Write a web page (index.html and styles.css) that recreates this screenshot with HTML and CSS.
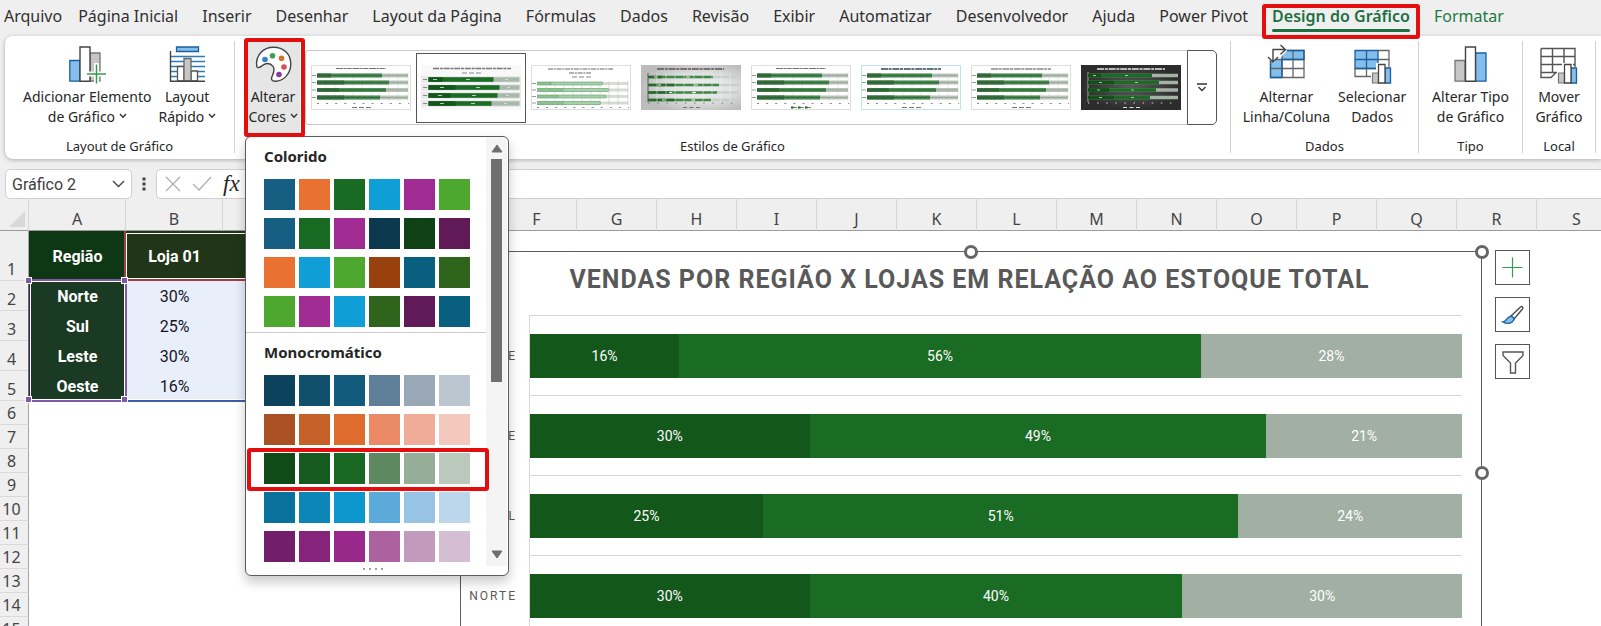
FILE: index.html
```html
<!DOCTYPE html>
<html lang="pt-BR">
<head>
<meta charset="utf-8">
<title>Vendas por região</title>
<link rel="stylesheet" href="styles.css">
</head>
<body>
<svg class="defs" aria-hidden="true">
  <defs>
    <symbol id="chev" viewBox="0 0 8 6"><path d="M1 1l3 3.2L7 1" fill="none" stroke="#333" stroke-width="1.4"/></symbol>
    <g id="title-sm"><path d="M25 3.500h50" stroke="#444" stroke-width="1.2" stroke-dasharray="7 .6 2.5 .6 5 .8" opacity=".75"/></g>
    <g id="axis-sm">
      <path d="M6 38.5h92" stroke="#888" stroke-width="1" stroke-dasharray="2 7.1"/>
      <path d="M41 42.5h19" stroke="#777" stroke-width="1" stroke-dasharray="5 2"/>
      <path d="M1 10.5h4M1 17.5h4M1 25h4M1 32.5h4" stroke="#999" stroke-width="1"/>
      <path d="M15 8v28M24 8v28M33 8v28M42 8v28M51 8v28M60 8v28M69 8v28M78 8v28M87 8v28M97 8v28" stroke="#ddd" stroke-width=".6"/>
    </g>
    <g id="bars-sm" stroke-width="4">
      <path d="M6 10.5h91M6 17.5h91M6 25h91M6 32.5h91" stroke="#b9c3b9"/>
      <path d="M6 10.5h65M6 17.5h72M6 25h69M6 32.5h63" stroke="#4f9158"/>
      <path d="M6 10.5h14M6 17.5h27M6 25h22M6 32.5h27" stroke="#3c7343"/>
      <path d="M6 10.5h65M6 17.5h72M6 25h69M6 32.5h63" stroke="#1f5a28" stroke-width="1.4" opacity=".6"/>
      <path d="M71 10.5h26M78 17.5h19M75 25h22M69 32.5h28" stroke="#7d8c7e" stroke-width=".8" opacity=".6"/>
    </g>
  </defs>
</svg>
<div class="app">
  <nav class="tabs">
    <a class="tab tab-file" href="#">Arquivo</a>
    <a class="tab" href="#">Página Inicial</a>
    <a class="tab" href="#">Inserir</a>
    <a class="tab" href="#">Desenhar</a>
    <a class="tab" href="#">Layout da Página</a>
    <a class="tab" href="#">Fórmulas</a>
    <a class="tab" href="#">Dados</a>
    <a class="tab" href="#">Revisão</a>
    <a class="tab" href="#">Exibir</a>
    <a class="tab" href="#">Automatizar</a>
    <a class="tab" href="#">Desenvolvedor</a>
    <a class="tab" href="#">Ajuda</a>
    <a class="tab" href="#">Power Pivot</a>
    <a class="tab tab-active" href="#">Design do Gráfico<span class="mark mark-tab"></span></a>
    <a class="tab tab-context" href="#">Formatar</a>
  </nav>

  <div class="ribbon">
    <section class="group group-layout">
      <div class="tools">
        <button class="tool">
          <svg class="icon" viewBox="0 0 37 38"><path d="M.8 14.5h10v20.7H.8z" fill="#83beec" stroke="#1c5f9e" stroke-width="1.3"/><path d="M21 7h10v28H21z" fill="#c8c6c4" stroke="#797774" stroke-width="1.3"/><path d="M11 1h10v34.2H11z" fill="#fff" stroke="#444" stroke-width="1.4"/><path d="M27.5 17v21M17 28h20" stroke="#fff" stroke-width="5"/><path d="M27.5 18.5v19M18 28h19" stroke="#2f9e4c" stroke-width="1.5"/></svg>
          <span>Adicionar Elemento<br>de Gráfico <svg class="chev"><use href="#chev"/></svg></span>
        </button>
        <button class="tool">
          <svg class="icon" viewBox="0 0 37 38"><path d="M1.5 10.5H36M1.5 15.5H36M1.5 20.5H36M1.5 25.5H36M1.5 30.5H36" stroke="#2b7cb5" stroke-width="1.4"/><path d="M7.5 1h22v4.5h-22z" fill="#83beec" stroke="#1c5f9e" stroke-width="1.3"/><path d="M8.5 20.5h6.5V35H8.5zM22 25h6.5v10H22z" fill="#fff" stroke="#555" stroke-width="1.3"/><path d="M15 12.5h7V35h-7z" fill="#c8c6c4" stroke="#666" stroke-width="1.3"/><path d="M1.5 5v30.2H36" fill="none" stroke="#444" stroke-width="1.4"/></svg>
          <span>Layout<br>Rápido <svg class="chev"><use href="#chev"/></svg></span>
        </button>
      </div>
      <h2 class="group-name">Layout de Gráfico</h2>
    </section>

    <section class="group group-styles">
      <div class="tools">
        <div class="colors">
          <button class="tool tool-open" aria-expanded="true">
            <svg class="icon" viewBox="0 0 37 38"><path d="M1.8 20.5C.2 9.5 8 1.2 18.5 1.2 28.5 1.2 35.8 8 35.8 18c0 9.800-7.500 17.500-16 17.200-3.800-.1-3.800-2.800-2.600-5.200 1.400-3 3.200-6.300.8-9.600-2.500-3.200-6-3.400-9.200-1.700-2.600 1.400-5.900 4.600-7 1.800z" fill="#fff" stroke="#444" stroke-width="1.4"/><circle cx="10" cy="13.5" r="2.8" fill="#2e84cc"/><circle cx="17.5" cy="9.8" r="2.8" fill="#3f9e54"/><circle cx="26.5" cy="12.2" r="2.8" fill="#d8732a"/><circle cx="29" cy="21" r="2.8" fill="#d6505a"/><circle cx="24" cy="28.5" r="2.8" fill="#8c36a8"/></svg>
            <span>Alterar<br>Cores <svg class="chev"><use href="#chev"/></svg></span>
          </button>
          <span class="mark mark-colors"></span>

          <div class="menu">
            <div class="menu-body">
              <div class="palette">
                <section class="palette-part">
                  <h3>Colorido</h3>
                  <button class="ramp" aria-label="Colorido 1"><i class="c-blue"></i><i class="c-orange"></i><i class="c-green"></i><i class="c-cyan"></i><i class="c-purple"></i><i class="c-lime"></i></button>
                  <button class="ramp" aria-label="Colorido 2"><i class="c-blue"></i><i class="c-green"></i><i class="c-purple"></i><i class="c-navy"></i><i class="c-forest"></i><i class="c-plum"></i></button>
                  <button class="ramp" aria-label="Colorido 3"><i class="c-orange"></i><i class="c-cyan"></i><i class="c-lime"></i><i class="c-rust"></i><i class="c-teal"></i><i class="c-moss"></i></button>
                  <button class="ramp" aria-label="Colorido 4"><i class="c-lime"></i><i class="c-purple"></i><i class="c-cyan"></i><i class="c-moss"></i><i class="c-plum"></i><i class="c-teal"></i></button>
                </section>
                <section class="palette-part">
                  <h3>Monocromático</h3>
                  <button class="ramp" aria-label="Monocromático azul"><i class="b1"></i><i class="b2"></i><i class="b3"></i><i class="b4"></i><i class="b5"></i><i class="b6"></i></button>
                  <button class="ramp" aria-label="Monocromático laranja"><i class="o1"></i><i class="o2"></i><i class="o3"></i><i class="o4"></i><i class="o5"></i><i class="o6"></i></button>
                  <button class="ramp" aria-label="Monocromático verde"><i class="g1"></i><i class="g2"></i><i class="g3"></i><i class="g4"></i><i class="g5"></i><i class="g6"></i><span class="mark mark-ramp"></span></button>
                  <button class="ramp" aria-label="Monocromático ciano"><i class="s1"></i><i class="s2"></i><i class="s3"></i><i class="s4"></i><i class="s5"></i><i class="s6"></i></button>
                  <button class="ramp" aria-label="Monocromático roxo"><i class="p1"></i><i class="p2"></i><i class="p3"></i><i class="p4"></i><i class="p5"></i><i class="p6"></i></button>
                </section>
              </div>
              <div class="scroll">
                <svg class="arrow" viewBox="0 0 12 9"><path d="M6 1l5 7H1z" fill="#6e6e6e" stroke="#6e6e6e" stroke-linejoin="round"/></svg>
                <div class="thumb"></div>
                <svg class="arrow" viewBox="0 0 12 9"><path d="M6 8l5-7H1z" fill="#6e6e6e" stroke="#6e6e6e" stroke-linejoin="round"/></svg>
              </div>
            </div>
            <div class="grip"><i></i><i></i><i></i><i></i></div>
          </div>
        </div>

        <div class="gallery">
          <div class="styles">
            <button class="style" aria-label="Estilo 1"><svg viewBox="0 0 100 45"><path d="M.5.5h99v44H.5z" fill="#fff" stroke="#ddd"/><use href="#title-sm"/><use href="#axis-sm"/><use href="#bars-sm"/></svg></button>
            <button class="style style-on" aria-label="Estilo 2"><svg viewBox="0 0 100 45"><path d="M0 0h100v45H0z" fill="#e9eaec"/><path d="M0 0h100v11H0zM0 18h100v1H0zM0 26h100v1H0zM0 34h100v1H0zM0 42h100v3H0z" fill="#f8f8f8"/><path d="M12 3.5h78" stroke="#777" stroke-width="1.6" stroke-dasharray="6 .8 3 .8"/><path d="M41 8h19" stroke="#888" stroke-width="1" stroke-dasharray="5 2"/><path d="M2 14.5h4M2 22.5h4M2 30.5h4M2 38.5h4" stroke="#888"/><g stroke-width="4.5"><path d="M7.5 14.5h91M7.5 22.5h91M7.5 30.5h91M7.5 38.5h91" stroke="#a9b8aa"/><path d="M7.5 14.5h65M7.5 22.5h71M7.5 30.5h69M7.5 38.5h63" stroke="#1a6b23"/><path d="M7.5 14.5h14M7.5 22.5h27M7.5 30.5h22M7.5 38.5h27" stroke="#13551b"/></g><path d="M12 14.5h4M45 14.5h4M84 14.5h3M19 22.5h4M55 22.5h4M86 22.5h3M17 30.5h4M51 30.5h4M85 30.5h3M19 38.5h4M50 38.5h4M83 38.5h3" stroke="#dfe8df" stroke-width=".8"/></svg></button>
            <button class="style" aria-label="Estilo 3"><svg viewBox="0 0 100 45"><path d="M.5.5h99v44H.5z" fill="#fff" stroke="#ddd"/><path d="M17 4h65M38 8h22" stroke="#999" stroke-width="1.3" stroke-dasharray="5 .8 2 .8"/><path d="M41 12h19" stroke="#888" stroke-dasharray="5 2"/><path d="M6 42.5h92" stroke="#888" stroke-dasharray="2 7.1"/><path d="M1 18.5h4M1 25h4M1 31.5h4M1 38h4" stroke="#999"/><g stroke-width="3"><path d="M6 18.5h91M6 25h91M6 31.5h91M6 38h91" stroke="#d5dbd5"/><path d="M6 18.5h65M6 25h71M6 31.5h69M6 38h63" stroke="#a5d0a9"/><path d="M6 18.5h14M6 25h27M6 31.5h22M6 38h27" stroke="#8cc092"/></g><path d="M6 17h65M6 20h65M6 23.5h71M6 26.5h71M6 30h69M6 33h69M6 36.5h63M6 39.5h63M71.5 17v3M77.5 23.5v3M75 30v3M69.5 36.5v3M20 17v3" stroke="#5ba365" stroke-width=".6"/><path d="M15 16v24M24 16v24M33 16v24M42 16v24M51 16v24M60 16v24M69 16v24M78 16v24M87 16v24M97 16v24" stroke="#bbb" stroke-width=".5"/></svg></button>
            <button class="style" aria-label="Estilo 4"><svg viewBox="0 0 100 45"><defs><radialGradient id="grey" cx=".6" cy=".5" r=".6"><stop offset="0" stop-color="#efefef"/><stop offset=".5" stop-color="#e2e2e2"/><stop offset="1" stop-color="#bcbcbc"/></radialGradient></defs><path d="M0 0h100v45H0z" fill="url(#grey)"/><path d="M16 4h67" stroke="#555" stroke-width="1.3" stroke-dasharray="7 .8 3 .8"/><path d="M7 8v29" stroke="#555"/><path d="M7 38h92" stroke="#777" stroke-dasharray="1.5 7.7"/><path d="M42 42.5h18" stroke="#777" stroke-dasharray="4 2.5"/><g stroke-width="2.5"><path d="M7 12h91M7 20h91M7 27.5h91M7 35h91" stroke="#c9d0c9"/><path d="M7 12h65M7 20h71M7 27.5h69M7 35h63" stroke="#3c8a46"/><path d="M7 12h14M7 20h27M7 27.5h22M7 35h27" stroke="#27682f"/></g><path d="M13 12h3M45 12h4M17 20h3M53 20h4M28 27.5h3M51 27.5h4M21 35h3M50 35h4" stroke="#eee"/><path d="M16 8v29M25 8v29M34 8v29M43 8v29M53 8v29M62 8v29M71 8v29M80 8v29M89 8v29" stroke="#eee" stroke-width=".5"/></svg></button>
            <button class="style" aria-label="Estilo 5"><svg viewBox="0 0 100 45"><path d="M.5.5h99v44H.5z" fill="#fff" stroke="#ddd"/><use href="#title-sm"/><use href="#axis-sm"/><use href="#bars-sm"/><path d="M40 42.5h20" stroke="#28602f" stroke-width="2" stroke-dasharray="2.5 4.5"/></svg></button>
            <button class="style" aria-label="Estilo 6"><svg viewBox="0 0 100 45"><path d="M.5.5h99v44H.5z" fill="#fff" stroke="#c3e0f0"/><path d="M20 4h60" stroke="#345" stroke-width="1.3" stroke-dasharray="7 .6 3 .8"/><use href="#axis-sm"/><use href="#bars-sm"/></svg></button>
            <button class="style" aria-label="Estilo 7"><svg viewBox="0 0 100 45"><path d="M.5.5h99v44H.5z" fill="#fff" stroke="#ddd"/><path d="M20 4h60" stroke="#888" stroke-width="1.3" stroke-dasharray="7 .6 3 .8"/><use href="#axis-sm"/><use href="#bars-sm"/></svg></button>
            <button class="style" aria-label="Estilo 8"><svg viewBox="0 0 100 45"><defs><radialGradient id="dark"><stop offset="0" stop-color="#5a5a5a"/><stop offset="1" stop-color="#2c2c2c"/></radialGradient></defs><path d="M0 0h100v45H0z" fill="url(#dark)"/><path d="M16 4h68" stroke="#e8e8e8" stroke-width="1.3" stroke-dasharray="7 .8 3 .8"/><path d="M7 7v30" stroke="#aaa"/><g stroke-width="3.5"><path d="M7 10.5h90M7 17.5h90M7 25h90M7 32.5h90" stroke="#a5b3a6"/><path d="M7 10.5h64M7 17.5h71M7 25h68M7 32.5h62" stroke="#1a6b23"/><path d="M7 10.5h13M7 17.5h26M7 25h21M7 32.5h26" stroke="#124f19"/></g><path d="M12 10.5h3M44 10.5h3M18 17.5h3M54 17.5h3M16 25h3M50 25h3M18 32.5h3M50 32.5h3" stroke="#cde0cf" stroke-width=".8"/><path d="M7 38h91" stroke="#ccc" stroke-dasharray="1.5 7.6"/><path d="M42 42.5h18" stroke="#ddd" stroke-dasharray="4 2.5"/></svg></button>
          </div>
          <button class="more" aria-label="Mais estilos"><svg viewBox="0 0 10 9"><path d="M0 1h10M1.5 4L5 7.5 8.5 4" fill="none" stroke="#333" stroke-width="1.3"/></svg></button>
        </div>
      </div>
      <h2 class="group-name">Estilos de Gráfico</h2>
    </section>

    <section class="group group-data">
      <div class="tools">
        <button class="tool">
          <svg class="icon" viewBox="0 0 37 38"><path d="M3 4.5h33v27H3z" fill="#fff"/><path d="M13 4.5h23v9H14v18H2.5v-18h11z" fill="#83beec"/><path d="M2.5 31.5v-18M2.5 31.5H36v-27H14M14 4.5v27M25 4.5v27M2.5 13.5H36M2.5 22.5H36" fill="none" stroke="#666" stroke-width="1.3"/><path d="M14 31.5H2.5v-18M14 31.5v-18h22v-9H14" fill="none" stroke="#1c5f9e" stroke-width="1.3"/><path d="M0 0h17l2 5-6 6H9l-3 6-6-4z" fill="#fff"/><path d="M5 15V3.500h12M0 11l5 5 5-5M12.500-1l5 4.700-5 4.600" fill="none" stroke="#444" stroke-width="1.4"/></svg>
          <span>Alternar<br>Linha/Coluna</span>
        </button>
        <button class="tool">
          <svg class="icon" viewBox="0 0 37 38"><path d="M1 4.5h34v26H1z" fill="#fff"/><path d="M1 4.5h23v18H1z" fill="#83beec"/><path d="M1 22.5v8h34v-26H24M24 13.5h11M1 22.5h34M12.5 22.5v8M24 22.5v8" fill="none" stroke="#666" stroke-width="1.3"/><path d="M1 4.5h23v18H1zM12.5 4.5v18M1 13.5h23" fill="none" stroke="#1c5f9e" stroke-width="1.3"/><path d="M17 25h5v-8h11v4h5v18H17z" fill="#fff"/><path d="M18.5 27h6v10h-6z" fill="#c8c6c4" stroke="#797774" stroke-width="1.2"/><path d="M31 22h5.5v15H31z" fill="#83beec" stroke="#1c5f9e" stroke-width="1.3"/><path d="M24.5 18.5H31V37h-6.5z" fill="#fff" stroke="#444" stroke-width="1.3"/></svg>
          <span>Selecionar<br>Dados</span>
        </button>
      </div>
      <h2 class="group-name">Dados</h2>
    </section>

    <section class="group group-type">
      <div class="tools">
        <button class="tool">
          <svg class="icon" viewBox="0 0 37 38"><path d="M3 14.5h10v20.7H3z" fill="#c8c6c4" stroke="#797774" stroke-width="1.3"/><path d="M23.5 7H34v28.2H23.5z" fill="#83beec" stroke="#1c5f9e" stroke-width="1.3"/><path d="M13.5 1h10v34.2h-10z" fill="#fff" stroke="#444" stroke-width="1.4"/></svg>
          <span>Alterar Tipo<br>de Gráfico</span>
        </button>
      </div>
      <h2 class="group-name">Tipo</h2>
    </section>

    <section class="group group-place">
      <div class="tools">
        <button class="tool">
          <svg class="icon" viewBox="0 0 37 38"><path d="M1 2.5h34v22M1 2.5v29h10l5-5H1M1 10.5h34M1 18.5h34M12.5 2.5v24M24 2.5v18M13 26.5h7" fill="none" stroke="#555" stroke-width="1.4"/><path d="M17 25h5v-8h11v4h5v18H17z" fill="#fff"/><path d="M18.5 27h6v10h-6z" fill="#c8c6c4" stroke="#797774" stroke-width="1.2"/><path d="M31 22h5.5v15H31z" fill="#83beec" stroke="#1c5f9e" stroke-width="1.3"/><path d="M24.5 18.5H31V37h-6.5z" fill="#fff" stroke="#444" stroke-width="1.3"/></svg>
          <span>Mover<br>Gráfico</span>
        </button>
      </div>
      <h2 class="group-name">Local</h2>
    </section>
  </div>

  <div class="formula-bar">
    <div class="name-box">
      <input aria-label="Caixa de nome" value="Gráfico 2">
      <button aria-label="Abrir lista de nomes"><svg viewBox="0 0 13 8"><path d="M1 1l5.5 5.5L12 1" fill="none" stroke="#444" stroke-width="1.4"/></svg></button>
    </div>
    <svg class="dots" viewBox="0 0 4 14"><path d="M.5.5h3v3h-3zM.5 5.5h3v3h-3zM.5 10.5h3v3h-3z" fill="#444"/></svg>
    <div class="formula">
      <button aria-label="Cancelar"><svg width="16" height="16" viewBox="0 0 16 16"><path d="M1 1l14 14M15 1L1 15" stroke="#b0b0b0" stroke-width="1.3"/></svg></button>
      <button aria-label="Inserir"><svg width="20" height="16" viewBox="0 0 20 16"><path d="M1 8l6 6L19 1" fill="none" stroke="#b0b0b0" stroke-width="1.3"/></svg></button>
      <button class="fx" aria-label="Inserir função">fx</button>
      <input aria-label="Barra de fórmulas">
    </div>
  </div>

  <main class="sheet">
    <table class="grid">
      <colgroup><col class="w-head"><col class="w-wide"><col class="w-wide"><col class="w-wide"><col class="w-wide"><col span="15" class="w-std"></colgroup>
      <thead>
        <tr><th class="corner"><svg viewBox="0 0 16 16"><path d="M16 0v16H0z" fill="#d8d8d8"/></svg></th><th>A</th><th>B</th><th>C</th><th>D</th><th>E</th><th>F</th><th>G</th><th>H</th><th>I</th><th>J</th><th>K</th><th>L</th><th>M</th><th>N</th><th>O</th><th>P</th><th>Q</th><th>R</th><th>S</th></tr>
      </thead>
      <tbody>
        <tr class="tall"><th>1</th><td class="key-head">Região</td><td class="val-head">Loja 01</td><td class="val-head"></td><td class="val-head"></td></tr>
        <tr class="mid"><th>2</th><td class="key">Norte</td><td class="val">30%</td><td class="val"></td><td class="val"></td></tr>
        <tr class="mid"><th>3</th><td class="key">Sul</td><td class="val">25%</td><td class="val"></td><td class="val"></td></tr>
        <tr class="mid"><th>4</th><td class="key">Leste</td><td class="val">30%</td><td class="val"></td><td class="val"></td></tr>
        <tr class="mid"><th>5</th><td class="key">Oeste</td><td class="val">16%</td><td class="val"></td><td class="val"></td></tr>
        <tr><th>6</th></tr>
        <tr><th>7</th></tr>
        <tr><th>8</th></tr>
        <tr><th>9</th></tr>
        <tr><th>10</th></tr>
        <tr><th>11</th></tr>
        <tr><th>12</th></tr>
        <tr><th>13</th></tr>
        <tr><th>14</th></tr>
        <tr><th>15</th></tr>
      </tbody>
    </table>

    <div class="range range-series"></div>
    <div class="range range-values"></div>
    <div class="range range-keys"><i class="knob tl"></i><i class="knob tr"></i><i class="knob bl"></i><i class="knob br"></i></div>

    <figure class="chart">
      <i class="handle h-top"></i><i class="handle h-corner"></i><i class="handle h-side"></i>
      <figcaption>VENDAS POR REGIÃO X LOJAS EM RELAÇÃO AO ESTOQUE TOTAL</figcaption>
      <div class="plot">
        <div class="cat">OESTE</div><div class="track"><div class="bar"><span class="s-dark" style="width:16%">16%</span><span class="s-mid" style="width:56%">56%</span><span class="s-soft" style="width:28%">28%</span></div></div>
        <div class="cat">LESTE</div><div class="track"><div class="bar"><span class="s-dark" style="width:30%">30%</span><span class="s-mid" style="width:49%">49%</span><span class="s-soft" style="width:21%">21%</span></div></div>
        <div class="cat">SUL</div><div class="track"><div class="bar"><span class="s-dark" style="width:25%">25%</span><span class="s-mid" style="width:51%">51%</span><span class="s-soft" style="width:24%">24%</span></div></div>
        <div class="cat">NORTE</div><div class="track"><div class="bar"><span class="s-dark" style="width:30%">30%</span><span class="s-mid" style="width:40%">40%</span><span class="s-soft" style="width:30%">30%</span></div></div>
      </div>
      <div class="chart-tools">
        <button aria-label="Elementos do gráfico"><svg viewBox="0 0 24 24"><path d="M11.5 1.500v20M1.500 11.500h20" stroke="#2f9e4c" stroke-width="1.2"/></svg></button>
        <button aria-label="Estilos de gráfico"><svg viewBox="0 0 24 24"><path d="M10 13L19.5 4c1.500-1.200 3.200.2 2 2L13 16z" fill="#fff" stroke="#444" stroke-width="1.3"/><path d="M2 19c3 0 3.500-5 7.500-5.500 2.500-.3 4 2 3 4C11 20.500 6 21.500 2 19z" fill="#83beec" stroke="#1c5f9e" stroke-width="1.3"/></svg></button>
        <button aria-label="Filtros de gráfico"><svg viewBox="0 0 24 24"><path d="M2 2h20v3.500l-7.500 7.500v10h-5V13L2 5.500z" fill="#fff" stroke="#555" stroke-width="1.4"/></svg></button>
      </div>
    </figure>
  </main>
</div>
</body>
</html>
```
FILE: styles.css
```css
* { box-sizing: border-box; }
body { margin: 0; background: #efefef; color: #262626; font-family: "Noto Sans", "Open Sans", sans-serif; }
button, input { margin: 0; padding: 0; border: 0; background: none; color: inherit; font: inherit; }
h2, h3, figure { margin: 0; }
svg { display: block; }
.defs { position: absolute; width: 0; height: 0; }
.app { display: flex; flex-direction: column; height: 100vh; overflow: hidden; }

.tabs { display: flex; gap: 24px; height: 36px; padding-left: 4px; font-size: 16px; line-height: 32px; }
.tab { flex: none; color: #303030; text-decoration: none; white-space: nowrap; }
.tab-file { margin-right: -8px; }
.tab-active { position: relative; color: #1e6f42; font-weight: 600; }
.tab-active::after { content: ""; position: absolute; left: 0; right: 0; bottom: 4px; height: 3px; border-radius: 2px; background: #1e6f42; }
.tab-context { color: #1e7a45; }

.mark { position: absolute; border: 4px solid #e30f0f; border-radius: 3px; pointer-events: none; }
.mark-tab { inset: 4px -10px -3px; z-index: 3; }
.mark-colors { inset: -3px -5px -2px -2px; z-index: 6; }
.mark-ramp { inset: -5px -19px -7px -17px; }

.ribbon { position: relative; z-index: 2; display: flex; flex: none; height: 123px; margin-left: 5px; padding: 5px 5px 6px 0; background: #fff; border-radius: 8px 0 0 8px; box-shadow: 0 1px 4px rgba(0, 0, 0, .28); }
.group { display: flex; flex: none; flex-direction: column; justify-content: space-between; border-right: 1px solid #d2d2d2; }
.group-name { font-size: 13px; font-weight: 400; line-height: 14px; text-align: center; }
.tools { display: flex; justify-content: center; }
.group-layout { width: 230px; }
.group-layout .tools { gap: 7px; }
.group-styles { flex: 1; }
.group-styles .tools { gap: 5px; padding: 0 13px 0 11px; }
.group-data { width: 188px; }
.group-data .tools { gap: 8px; }
.group-type { width: 104px; }
.group-place { width: 73px; }
.tool { display: flex; flex-direction: column; align-items: center; gap: 3px; padding-top: 5px; font-size: 14px; line-height: 20px; text-align: center; white-space: nowrap; }
.icon { width: 37px; height: 38px; overflow: visible; }
.chev { display: inline-block; width: 8px; height: 6px; margin-bottom: 3px; }
.colors { position: relative; }
.tool-open { width: 54px; height: 94px; background: #e6e6e6; }

.gallery { display: flex; flex: 1; height: 75px; margin-top: 9px; }
.styles { display: flex; flex: 1; align-items: center; border: 1px solid #c8c8c8; border-right: 0; border-radius: 4px 0 0 4px; }
.style { display: flex; flex: none; align-items: center; justify-content: center; width: 110px; height: 70px; border: 1px solid transparent; }
.style svg { width: 100px; height: 45px; }
.style-on { border-color: #555; }
.more { display: flex; align-items: center; justify-content: center; width: 30px; border: 1px solid #555; border-radius: 0 5px 5px 0; }
.more svg { width: 10px; height: 9px; }

.menu { position: absolute; top: 95px; left: -1px; z-index: 5; width: 264px; border: 1px solid #5c5c5c; border-radius: 6px; background: #fff; box-shadow: 0 6px 12px rgba(0, 0, 0, .22); }
.menu-body { display: flex; padding-right: 1px; }
.palette { flex: 1; }
.palette-part { display: flex; flex-direction: column; gap: 8px; padding: 5px 0 5px 18px; }
.palette-part + .palette-part { border-top: 1px solid #ccc; padding-bottom: 4px; }
.palette-part h3 { padding-bottom: 1px; font-size: 15px; line-height: 28px; }
.ramp { position: relative; display: flex; gap: 4px; width: 206px; }
.ramp i { width: 31px; height: 31px; }
.scroll { display: flex; flex-direction: column; align-items: center; width: 21px; padding: 7px 0; background: #f4f4f4; border-radius: 0 6px 0 0; }
.arrow { width: 12px; height: 9px; }
.thumb { width: 11px; height: 223px; margin: 6px 0 auto; background: #6f6f6f; }
.grip { display: flex; justify-content: center; gap: 4px; padding: 2px 8px 5px 0; }
.grip i { width: 2px; height: 2px; background: #9a9ab0; }

.c-blue { background: #165f82; } .c-orange { background: #e97132; } .c-green { background: #196b24; }
.c-cyan { background: #0f9ed5; } .c-purple { background: #a02b93; } .c-lime { background: #4ea72e; }
.c-navy { background: #0d394e; } .c-forest { background: #0f4016; } .c-plum { background: #601a58; }
.c-rust { background: #98410f; } .c-teal { background: #095f80; } .c-moss { background: #2f641c; }
.b1 { background: #0c425c; } .b2 { background: #10506d; } .b3 { background: #135b7d; } .b4 { background: #5f7e98; } .b5 { background: #98a8b7; } .b6 { background: #bcc6d0; }
.o1 { background: #a95123; } .o2 { background: #c66029; } .o3 { background: #de6c2f; } .o4 { background: #ea8a66; } .o5 { background: #efad99; } .o6 { background: #f3c9be; }
.g1 { background: #0f4b17; } .g2 { background: #155a1e; } .g3 { background: #186722; } .g4 { background: #5e8860; } .g5 { background: #96ad97; } .g6 { background: #bbc8bc; }
.s1 { background: #08729c; } .s2 { background: #0b86b7; } .s3 { background: #0e97cc; } .s4 { background: #5baada; } .s5 { background: #97c3e4; } .s6 { background: #bcd7ec; }
.p1 { background: #731e6a; } .p2 { background: #86237b; } .p3 { background: #98298b; } .p4 { background: #ab629f; } .p5 { background: #c29abb; } .p6 { background: #d4bed1; }

.formula-bar { display: flex; flex: none; align-items: center; gap: 10px; padding: 10px 0 0 5px; }
.name-box { display: flex; align-items: center; width: 127px; height: 30px; padding: 0 6px; border: 1px solid #cfcfcf; border-radius: 5px; background: #fff; }
.name-box input { flex: 1; min-width: 0; font: 16px Roboto, sans-serif; color: #404040; }
.name-box svg { width: 13px; height: 8px; }
.dots { width: 4px; height: 14px; }
.formula { display: flex; flex: 1; align-items: center; gap: 11px; height: 30px; padding-left: 8px; border: 1px solid #cfcfcf; border-right: 0; border-radius: 5px 0 0 5px; background: #fff; }
.formula input { flex: 1; min-width: 0; }
.fx { font: italic 23px "Liberation Serif", serif; }

.sheet { position: relative; flex: 1; min-height: 0; overflow: hidden; background: #fff; }
.grid { width: 1617px; table-layout: fixed; border-collapse: separate; border-spacing: 0; }
.grid th, .grid td { padding: 0; }
.w-head { width: 29px; } .w-wide { width: 97px; } .w-std { width: 80px; }
.grid th { background: #efefef; color: #444; font-size: 16px; font-weight: 400; line-height: 22px; vertical-align: bottom; }
.grid thead th { height: 32px; border-bottom: 1px solid #9c9c9c; border-right: 1px solid #d6d6d6; }
.grid .corner { padding: 0 2px 3px 9px; }
.corner svg { width: 16px; height: 16px; }
.grid tbody th { height: 24px; padding-right: 5px; border-right: 1px solid #a6a6a6; border-bottom: 1px solid #dadada; }
.grid .mid th { height: 30px; }
.grid .tall th { height: 50px; }
.grid td { font: 16px Roboto, sans-serif; text-align: center; }
.grid .key-head, .grid .val-head, .grid .key { color: #fff; font-weight: 700; }
.key-head { background: #0e3814; }
.val-head { background: #213618; }
.key { background: #1a3a24; }
.val { background: #e9effa; color: #15152a; }

.range { position: absolute; }
.range-series { top: 32px; left: 124px; width: 292px; height: 50px; border: 2px solid #a63c44; border-top: 0; outline: 1px solid #fff; outline-offset: -3px; }
.range-values { top: 200px; left: 127px; width: 292px; height: 3px; border-top: 1px solid #fff; background: #3d5fa5; }
.range-keys { top: 80px; left: 28px; width: 99px; height: 123px; border: 2px solid #8059a5; border-left-width: 1px; outline: 1px solid #fff; outline-offset: -3px; }
.knob { position: absolute; width: 7px; height: 7px; border: 1px solid #fff; background: #8059a5; }
.tl, .tr { top: -4px; } .bl, .br { bottom: -3px; }
.tl, .bl { left: -4px; } .tr, .br { right: -3px; }

.chart { position: absolute; top: 52px; left: 460px; width: 1022px; height: 444px; padding: 12px 19px 0 8px; border: 1px solid #5c5c5c; background: #fff; color: #595959; font-family: Roboto, sans-serif; }
.chart figcaption { padding-left: 8px; font-size: 25px; font-weight: 700; line-height: 32px; letter-spacing: 1px; text-align: center; white-space: nowrap; }
.plot { display: grid; grid-template-columns: 60px 1fr; padding-top: 19px; }
.cat { padding-right: 12px; font-size: 12px; line-height: 82px; letter-spacing: 2px; text-align: right; }
.track { display: flex; align-items: center; height: 80px; border-top: 1px solid #d6d6d6; border-left: 1px solid #d6d6d6; }
.bar { display: flex; flex: 1; height: 44px; color: #fff; font-size: 14px; line-height: 44px; text-align: center; }
.plot { grid-auto-rows: 80px; }
.s-dark { background: #14571b; } .s-mid { background: #1a6b23; } .s-soft { background: #a1b0a2; }
.handle { position: absolute; width: 14px; height: 14px; border: 3px solid #666; border-radius: 50%; background: #fff; }
.h-top { top: -7px; left: calc(50% - 7px); }
.h-corner { top: -7px; right: -8px; }
.h-side { top: calc(50% - 7px); right: -8px; }
.chart-tools { position: absolute; top: -2px; left: calc(100% + 14px); display: flex; flex-direction: column; gap: 12px; }
.chart-tools button { display: flex; align-items: center; justify-content: center; width: 35px; height: 35px; border: 1px solid #555; background: #fff; }
.chart-tools svg { width: 24px; height: 24px; }
```
